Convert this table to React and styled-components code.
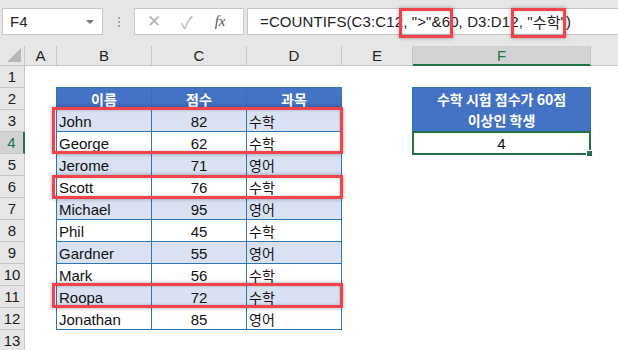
import React from 'react';
import styled, { createGlobalStyle } from 'styled-components';

const GlobalStyle = createGlobalStyle`
  html, body {
    margin: 0;
    padding: 0;
    background: #ffffff;
  }
  body {
    font-family: "Liberation Sans", "Noto Sans CJK KR", sans-serif;
  }
`;

const Page = styled.div`
  width: 618px;
  height: 350px;
  overflow: hidden;
  position: relative;
  background: #ffffff;
`;

const FormulaBar = styled.div`
  height: 46px;
  background: #e6e6e6;
  display: flex;
  align-items: flex-start;
  padding: 8px 0 0 2px;
  box-sizing: border-box;
`;

const NameBox = styled.div`
  width: 101px;
  height: 27px;
  box-sizing: border-box;
  background: #fff;
  border: 1px solid #c6c6c6;
  display: flex;
  align-items: center;
  justify-content: space-between;
  padding: 0 8px 0 7px;
  font-size: 15px;
  color: #222;
`;

const Caret = styled.span`
  width: 0;
  height: 0;
  border-left: 4px solid transparent;
  border-right: 4px solid transparent;
  border-top: 4px solid #777;
`;

const Grip = styled.div`
  width: 31px;
  height: 27px;
  display: flex;
  flex-direction: column;
  align-items: center;
  justify-content: center;
  gap: 2px;
  span {
    width: 2px;
    height: 2px;
    background: #a8a8a8;
  }
`;

const FxBox = styled.div`
  width: 110px;
  height: 27px;
  box-sizing: border-box;
  background: #fff;
  border: 1px solid #c6c6c6;
  display: flex;
  align-items: center;
  padding: 0 0 0 12px;
  gap: 20px;
  color: #b4b4b4;
  font-size: 17px;
`;

const FxLabel = styled.span`
  font-family: "Liberation Serif", serif;
  font-style: italic;
  font-size: 15px;
  color: #555;
  margin-left: 2px;
`;

const FormulaInput = styled.div`
  flex: 1;
  margin-left: 3px;
  height: 27px;
  box-sizing: border-box;
  background: #fff;
  border: 1px solid #c6c6c6;
  border-right: none;
  display: flex;
  align-items: center;
  padding-left: 12px;
  font-size: 15px;
  letter-spacing: 0.12px;
  color: #222;
  white-space: pre;
`;

const Sheet = styled.div`
  display: grid;
  grid-template-columns: 25px 32px 95px 95px 95px 71px 178px 1fr;
  grid-template-rows: 20px repeat(13, 22px);
  position: relative;
`;

const ColHead = styled.div`
  grid-row: 1;
  background: ${p => (p.$active ? '#d2d2d2' : '#e6e6e6')};
  border-right: ${p => (p.$last ? 'none' : '1px solid #c6c6c6')};
  border-bottom: ${p => (p.$active ? '2px solid #217346' : '1px solid #c6c6c6')};
  box-sizing: border-box;
  display: flex;
  align-items: center;
  justify-content: center;
  font-size: 15px;
  color: ${p => (p.$active ? '#217346' : '#222')};
`;

const Corner = styled.div`
  grid-row: 1;
  grid-column: 1;
  background: #e6e6e6;
  border-right: 1px solid #c6c6c6;
  border-bottom: 1px solid #c6c6c6;
  box-sizing: border-box;
  position: relative;
  &::after {
    content: '';
    position: absolute;
    right: 3px;
    bottom: 3px;
    border-left: 14px solid transparent;
    border-bottom: 14px solid #b8b8b8;
  }
`;

const RowHead = styled.div`
  grid-column: 1;
  background: ${p => (p.$active ? '#d2d2d2' : '#e6e6e6')};
  border-bottom: 1px solid #c6c6c6;
  border-right: ${p => (p.$active ? '2px solid #217346' : '1px solid #c6c6c6')};
  box-sizing: border-box;
  display: flex;
  align-items: center;
  justify-content: center;
  font-size: 15px;
  color: ${p => (p.$active ? '#217346' : '#222')};
`;

const Cell = styled.div`
  box-sizing: border-box;
  display: flex;
  align-items: center;
  justify-content: ${p => p.$align || 'flex-start'};
  padding: 1px 2px 0;
  font-size: 15px;
  color: #111;
  white-space: nowrap;
  background: ${p => (p.$head ? '#4472c4' : p.$band ? '#d9e1f2' : '#ffffff')};
  border-right: 1px solid #2e75b6;
  border-bottom: 1px solid #2e75b6;
  border-left: ${p => (p.$first ? '1px solid #2e75b6' : 'none')};
  border-top: ${p => (p.$top ? '1px solid #2e75b6' : 'none')};
  margin-left: ${p => (p.$first ? '-1px' : '0')};
  margin-top: ${p => (p.$top ? '-1px' : '0')};
  ${p => p.$head && 'color: #fff; font-weight: bold;'}
`;

const Kor = styled.span`
  font-family: "Noto Sans CJK KR", sans-serif;
  font-size: ${p => p.$size || 14}px;
`;

const Summary = styled.div`
  grid-column: 7;
  grid-row: 3 / span 2;
  margin: -1px 0 0 -1px;
  background: #4472c4;
  border: 1px solid #2e75b6;
  color: #fff;
  font-family: "Noto Sans CJK KR", sans-serif;
  font-weight: bold;
  font-size: 14px;
  line-height: 21px;
  text-align: center;
  display: flex;
  align-items: center;
  justify-content: center;
`;

const Result = styled.div`
  grid-column: 7;
  grid-row: 5;
  margin: -1px 0 -1px -1px;
  border: 2px solid #217346;
  display: flex;
  align-items: center;
  justify-content: center;
  font-size: 15px;
  color: #111;
  position: relative;
  &::after {
    content: '';
    position: absolute;
    right: -4px;
    bottom: -4px;
    width: 5px;
    height: 5px;
    background: #217346;
    border: 1px solid #fff;
  }
`;

const Mark = styled.div`
  position: absolute;
  box-sizing: border-box;
  border: 3px solid #f0434b;
  box-shadow: 0 0 4px rgba(0, 0, 0, 0.35), inset 0 0 3px rgba(0, 0, 0, 0.25);
  pointer-events: none;
`;

const cols = ['A', 'B', 'C', 'D', 'E', 'F'];

const data = [
  ['John', 82, '수학'],
  ['George', 62, '수학'],
  ['Jerome', 71, '영어'],
  ['Scott', 76, '수학'],
  ['Michael', 95, '영어'],
  ['Phil', 45, '수학'],
  ['Gardner', 55, '영어'],
  ['Mark', 56, '수학'],
  ['Roopa', 72, '수학'],
  ['Jonathan', 85, '영어'],
];

const marks = [
  { left: 52, top: 107, width: 291, height: 47 },
  { left: 52, top: 175, width: 291, height: 24 },
  { left: 52, top: 283, width: 291, height: 25 },
  { left: 399, top: 8, width: 54, height: 30 },
  { left: 511, top: 8, width: 55, height: 30 },
];

export default function App() {
  return (
    <Page>
      <GlobalStyle />
      <FormulaBar>
        <NameBox>
          F4
          <Caret />
        </NameBox>
        <Grip>
          <span />
          <span />
          <span />
        </Grip>
        <FxBox>
          <span>✕</span>
          <span>✓</span>
          <FxLabel>fx</FxLabel>
        </FxBox>
        <FormulaInput>
          =COUNTIFS(C3:C12, "&gt;"&amp;60, D3:D12, "<Kor $size={15}>수학</Kor>")
        </FormulaInput>
      </FormulaBar>
      <Sheet>
        <Corner />
        {cols.map((c, i) => (
          <ColHead key={c} style={{ gridColumn: i + 2 }} $active={c === 'F'}>
            {c}
          </ColHead>
        ))}
        <ColHead style={{ gridColumn: 8 }} $last />
        {Array.from({ length: 13 }, (_, i) => (
          <RowHead key={i} style={{ gridRow: i + 2 }} $active={i === 3}>
            {i + 1}
          </RowHead>
        ))}
        <Cell $head $first $top style={{ gridRow: 3, gridColumn: 3 }} $align="center">
          <Kor>이름</Kor>
        </Cell>
        <Cell $head $top style={{ gridRow: 3, gridColumn: 4 }} $align="center">
          <Kor>점수</Kor>
        </Cell>
        <Cell $head $top style={{ gridRow: 3, gridColumn: 5 }} $align="center">
          <Kor>과목</Kor>
        </Cell>
        {data.map(([name, score, subj], i) => (
          <React.Fragment key={name}>
            <Cell $first $band={i % 2 === 0} style={{ gridRow: i + 4, gridColumn: 3 }}>
              {name}
            </Cell>
            <Cell $band={i % 2 === 0} $align="center" style={{ gridRow: i + 4, gridColumn: 4 }}>
              {score}
            </Cell>
            <Cell $band={i % 2 === 0} style={{ gridRow: i + 4, gridColumn: 5 }}>
              <Kor>{subj}</Kor>
            </Cell>
          </React.Fragment>
        ))}
        <Summary>
          수학 시험 점수가 60점
          <br />
          이상인 학생
        </Summary>
        <Result>4</Result>
      </Sheet>
      {marks.map((m, i) => (
        <Mark key={i} style={m} />
      ))}
    </Page>
  );
}
